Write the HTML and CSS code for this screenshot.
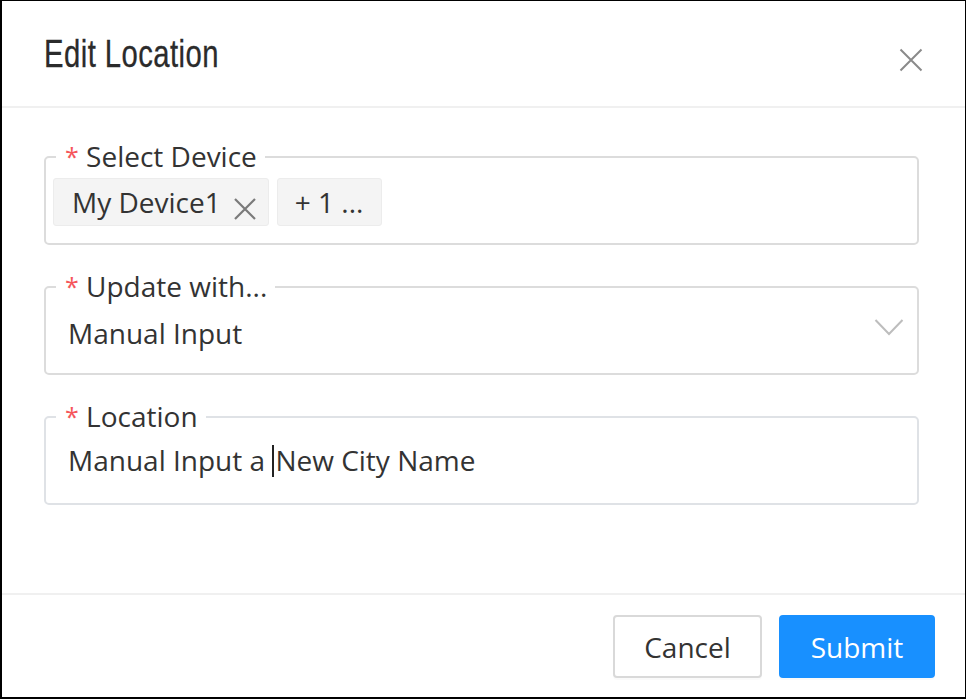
FILE: index.html
```html
<!DOCTYPE html>
<html>
<head>
<meta charset="utf-8">
<link rel="stylesheet" href="styles.css">
</head>
<body>
<div class="modal">
  <div class="modal-header">
    <h1 class="title">Edit Location</h1>
    <button class="close" aria-label="Close">
      <svg width="24" height="24" viewBox="0 0 24 24"><path d="M1.5 1.5 L22.5 22.5 M22.5 1.5 L1.5 22.5" stroke="#8a8a8a" stroke-width="2" fill="none"/></svg>
    </button>
  </div>
  <div class="modal-body">
    <fieldset class="field">
      <legend><span class="req">*</span> Select Device</legend>
      <div class="tags">
        <span class="tag">My Device1
          <svg class="tag-x" width="24" height="24" viewBox="0 0 24 24"><path d="M2 2 L22 22 M22 2 L2 22" stroke="#7a7a7a" stroke-width="2.2" fill="none"/></svg>
        </span>
        <span class="tag more">+ 1 ...</span>
      </div>
    </fieldset>
    <fieldset class="field">
      <legend><span class="req">*</span> Update with...</legend>
      <div class="select">
        <span class="value">Manual Input</span>
        <svg class="chev" width="30" height="18" viewBox="0 0 30 18"><path d="M1.5 2 L15 16 L28.5 2" stroke="#bdbdbd" stroke-width="2" fill="none"/></svg>
      </div>
    </fieldset>
    <fieldset class="field input-field">
      <legend><span class="req">*</span> Location</legend>
      <div class="input"><span>Manual Input a </span><span class="caret"></span><span>New City Name</span></div>
    </fieldset>
  </div>
  <div class="modal-footer">
    <button class="btn">Cancel</button>
    <button class="btn primary">Submit</button>
  </div>
</div>
</body>
</html>
```
FILE: styles.css
```css
* { box-sizing: border-box; }
html, body { margin: 0; padding: 0; background: #fff; }
body { font-family: "Open Sans", "Noto Sans", sans-serif; color: #333; }

.modal {
  width: 966px;
  height: 699px;
  border-style: solid;
  border-color: #000;
  border-width: 1px 1px 2px 2px;
  display: flex;
  flex-direction: column;
  background: #fff;
}

.modal-header {
  height: 107px;
  border-bottom: 2px solid #f0f0f0;
  display: flex;
  align-items: flex-start;
  justify-content: space-between;
  padding: 0 42px 0 42px;
}
.title {
  margin: 0;
  padding-top: 28px;
  font-family: "Liberation Sans", "Arial", sans-serif;
  font-weight: normal;
  font-size: 39px;
  line-height: 50px;
  color: #2b2b2b;
  letter-spacing: 0.6px;
  transform: scaleX(0.75);
  transform-origin: left center;
  -webkit-text-stroke: 0.3px #2b2b2b;
}
.close {
  margin-top: 47px;
  margin-right: 0;
  border: 0;
  background: none;
  padding: 0;
  width: 24px;
  height: 24px;
  display: block;
}
.close svg { display: block; }

.modal-body {
  flex: 1;
  padding: 32px 46px 0 42px;
  display: flex;
  flex-direction: column;
  gap: 25px;
}

.field {
  margin: 0;
  border: 2px solid #dcdcdc;
  border-radius: 5px;
  padding: 0 20px 0 22px;
  height: 105px;
  min-width: 0;
}
.field legend {
  margin-left: -12px;
  padding: 0 8px 0 9px;
  font-size: 28px;
  line-height: 32px;
  color: #333;
}
.req {
  color: #f5555a;
  font-size: 25px;
  position: relative;
  top: -1px;
}

.tags {
  display: flex;
  gap: 8px;
  margin-left: -15px;
  margin-top: 5px;
}
.tag {
  display: inline-flex;
  align-items: center;
  height: 48px;
  padding: 0 11px 0 18px;
  background: #f4f4f4;
  border: 1px solid #ececec;
  border-radius: 3px;
  font-size: 28px;
  color: #333;
}
.tag-x { margin-left: 12px; margin-top: 13px; }
.tag.more { padding: 0 18px 0 17px; }

.select {
  display: flex;
  align-items: center;
  justify-content: space-between;
  margin-top: 10px;
}
.value { font-size: 28px; line-height: 40px; color: #333; }
.chev { margin-right: -7px; margin-top: -13px; }

.input-field { border-color: #dfe2e6; }
.input {
  font-size: 28px;
  line-height: 40px;
  color: #333;
  margin-top: 7px;
  display: flex;
  align-items: center;
  white-space: pre;
}
.caret {
  display: inline-block;
  width: 2px;
  height: 32px;
  background: #222;
  margin: 2px 1px 0 0;
}

.modal-footer {
  height: 104px;
  border-top: 2px solid #f0f0f0;
  display: flex;
  justify-content: flex-end;
  align-items: flex-start;
  gap: 17px;
  padding: 20px 30px 0 0;
}
.btn {
  font-family: "Open Sans", "Noto Sans", sans-serif;
  font-size: 28px;
  height: 63px;
  padding: 0;
  border: 2px solid #d9d9d9;
  border-radius: 4px;
  background: #fff;
  color: #333;
  width: 149px;
  box-shadow: 0 2px 0 rgba(0,0,0,0.02);
}
.btn.primary {
  width: 156px;
  background: #1890ff;
  border-color: #1890ff;
  color: #fff;
}
```
